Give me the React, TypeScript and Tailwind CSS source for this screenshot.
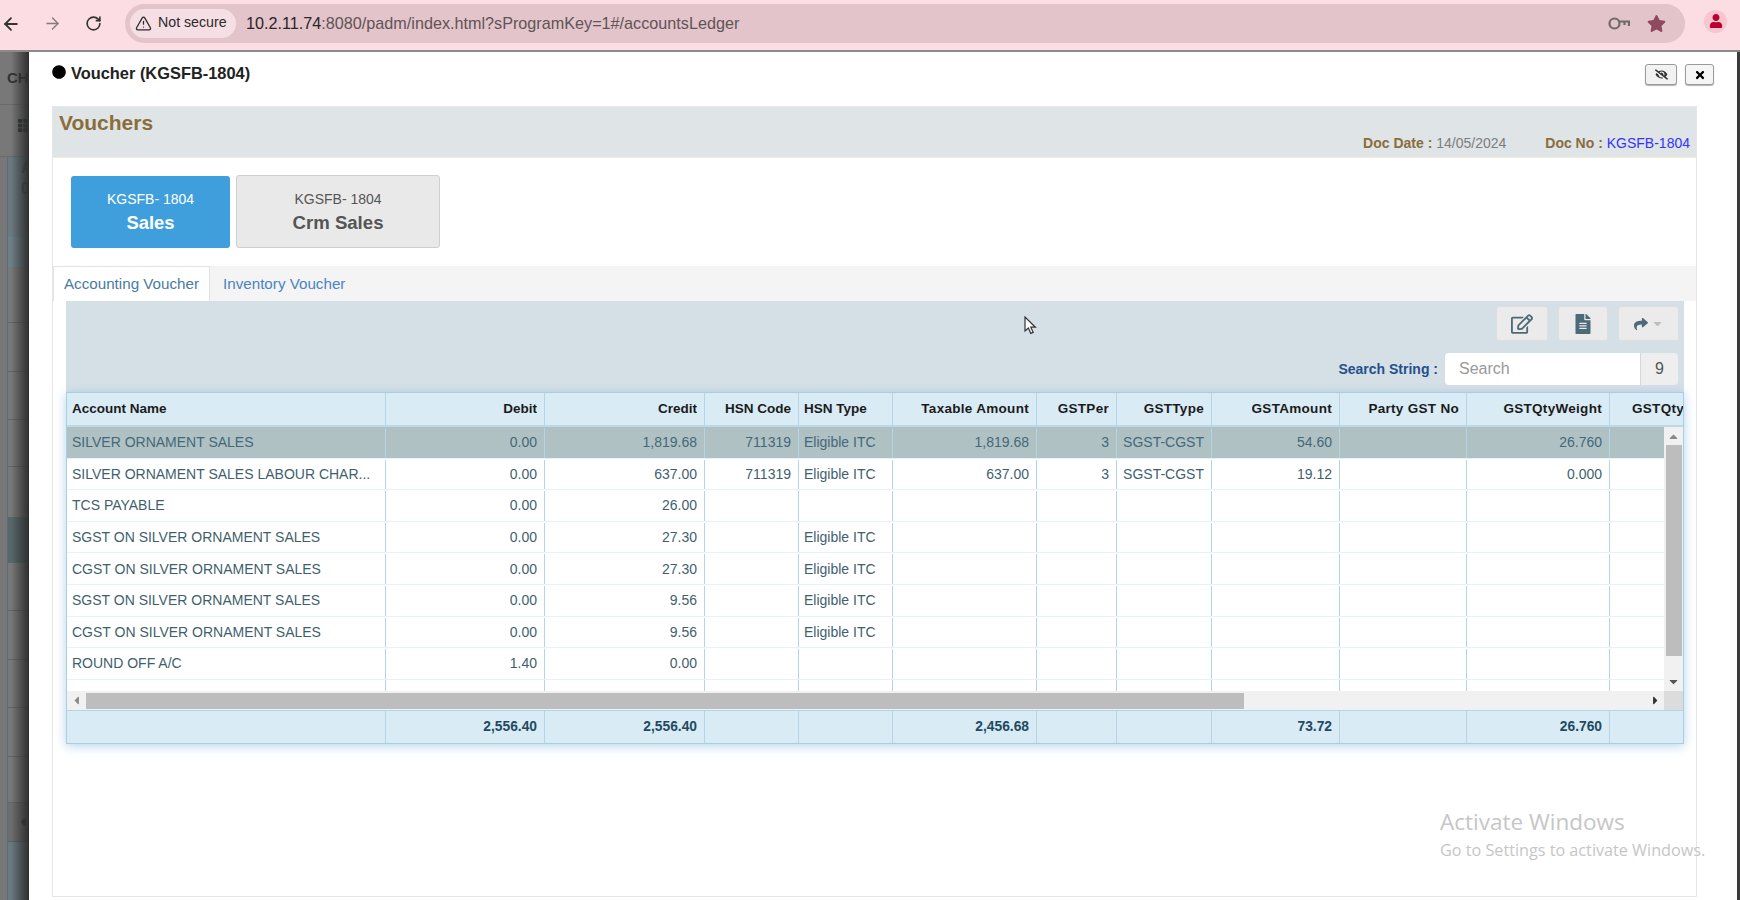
import React from "react";
import { ArrowLeft, ArrowRight, RotateCw, TriangleAlert } from "lucide-react";
import { FaRegEdit, FaFileAlt, FaShare, FaEyeSlash, FaTimes, FaStar, FaUser, FaTh, FaCaretDown, FaCaretUp, FaCaretLeft, FaCaretRight, FaCircle } from "react-icons/fa";

const widths = ["w-[319px]", "w-[159px]", "w-[160px]", "w-[94px]", "w-[94px]", "w-[144px]", "w-[80px]", "w-[95px]", "w-[128px]", "w-[127px]", "w-[143px]", "w-[75px]"];
const left = [true, false, false, false, true, false, false, false, false, false, false, false];
const headers = ["Account Name", "Debit", "Credit", "HSN Code", "HSN Type", "Taxable Amount", "GSTPer", "GSTType", "GSTAmount", "Party GST No", "GSTQtyWeight", "GSTQty"];
const rows = [
  ["SILVER ORNAMENT SALES", "0.00", "1,819.68", "711319", "Eligible ITC", "1,819.68", "3", "SGST-CGST", "54.60", "", "26.760", ""],
  ["SILVER ORNAMENT SALES LABOUR CHAR...", "0.00", "637.00", "711319", "Eligible ITC", "637.00", "3", "SGST-CGST", "19.12", "", "0.000", ""],
  ["TCS PAYABLE", "0.00", "26.00", "", "", "", "", "", "", "", "", ""],
  ["SGST ON SILVER ORNAMENT SALES", "0.00", "27.30", "", "Eligible ITC", "", "", "", "", "", "", ""],
  ["CGST ON SILVER ORNAMENT SALES", "0.00", "27.30", "", "Eligible ITC", "", "", "", "", "", "", ""],
  ["SGST ON SILVER ORNAMENT SALES", "0.00", "9.56", "", "Eligible ITC", "", "", "", "", "", "", ""],
  ["CGST ON SILVER ORNAMENT SALES", "0.00", "9.56", "", "Eligible ITC", "", "", "", "", "", "", ""],
  ["ROUND OFF A/C", "1.40", "0.00", "", "", "", "", "", "", "", "", ""],
];
const totals = ["", "2,556.40", "2,556.40", "", "", "2,456.68", "", "", "73.72", "", "26.760", ""];

function BackdropLine({ h, dark }: { h: string; dark?: boolean }) {
  return <div className={`${h} shrink-0 border-b border-[#5f6668] ${dark ? "bg-[#56686c]" : ""}`} />;
}

function Backdrop() {
  return (
    <div className="relative w-[29px] shrink-0 h-full overflow-hidden bg-[#787878]">
      <div className="h-[53px] border-b border-[#6a6a6a] pl-[7px] pt-[17px] text-[15px] font-bold leading-[18px] text-[#2f3436] whitespace-nowrap">CH</div>
      <div className="h-[52px] border-b border-[#6a6a6a] pl-[18px] pt-[13px] text-[#2f3436]"><FaTh size={15} /></div>
      <div className="ml-[7px] border-l border-[#5f6e76]">
        <div className="h-[79px] bg-[#6c7a80] pl-[13px] text-[16px] font-bold leading-[21px] text-[#3a566e]"><div>A</div><div>0</div></div>
        <div className="h-[32px] shrink-0 border-y border-[#5c7f90] bg-[#6f7f86]" />
        <BackdropLine h="h-[55px]" />
        <BackdropLine h="h-[49px]" />
        <BackdropLine h="h-[48px]" />
        <BackdropLine h="h-[47px]" />
        <div className="h-[50px]" />
        <BackdropLine h="h-[46px]" dark />
        <BackdropLine h="h-[48px]" />
        <BackdropLine h="h-[49px]" />
        <BackdropLine h="h-[48px]" />
        <BackdropLine h="h-[49px]" />
        <BackdropLine h="h-[46px]" />
        <div className="h-[39px] border-b border-[#4e646e] bg-[#6e6e6e] pl-[8px] pt-[12px] text-[#3a3a3a]"><FaCaretLeft size={14} /></div>
        <div className="h-[60px] bg-[#6a7a80]" />
      </div>
      <div className="absolute inset-y-0 right-0 w-[18px] bg-gradient-to-r from-transparent to-[#2e2e2e]" />
    </div>
  );
}

function Cell({ i, text, cls }: { i: number; text: string; cls: string }) {
  return (
    <div className={`${widths[i]} shrink-0 h-full border-r border-[#b3d5e6] pl-[5px] pr-[7px] flex items-center ${left[i] ? "justify-start" : "justify-end"} ${cls}`}>
      <span className="whitespace-nowrap overflow-hidden">{text}</span>
    </div>
  );
}

function Grid() {
  return (
    <div className="w-[1618px] border border-[#a6cfe4] shadow-[0_2px_10px_rgba(90,160,210,0.45)] bg-white overflow-hidden">
      <div className="flex h-[34px] bg-[#d9ebf4] border-b-2 border-[#c0d8e5] overflow-hidden">
        {headers.slice(0, 5).map((h, i) => (
          <Cell key={h} i={i} text={h} cls="text-[13.5px] font-bold text-[#1b1b1b]" />
        ))}
        {headers.slice(5, 11).map((h, i) => (
          <Cell key={h} i={i + 5} text={h} cls="text-[13.5px] tracking-[0.3px] font-bold text-[#1b1b1b]" />
        ))}
        <div className="w-[75px] shrink-0 pl-[22px] flex items-center text-[13.5px] tracking-[0.3px] font-bold text-[#1b1b1b] whitespace-nowrap">GSTQty</div>
      </div>
      <div className="flex h-[264px]">
        <div className="w-[1598px] overflow-hidden">
          {rows.map((r, n) => (
            <div key={n} className={`flex h-[31.6px] pt-[1px] border-b border-[#e6f2f8] overflow-hidden text-[14px] ${n === 0 ? "bg-[#b0c1c3] text-[#44687a]" : "bg-white text-[#3f5f6f]"}`}>
              {r.map((c, i) => (
                <Cell key={i} i={i} text={c} cls="" />
              ))}
            </div>
          ))}
          <div className="flex h-[12px] overflow-hidden">
            {widths.map((_, i) => (
              <Cell key={i} i={i} text="" cls="" />
            ))}
          </div>
        </div>
        <div className="w-[19px] flex flex-col items-center bg-[#f1f1f1] text-[#555]">
          <div className="h-[18px] flex items-center"><FaCaretUp size={13} className="text-[#8a8a8a]" /></div>
          <div className="h-[211px] w-[16px] bg-[#bdbdbd]" />
          <div className="flex-1 flex items-end pb-[3px]"><FaCaretDown size={13} /></div>
        </div>
      </div>
      <div className="flex h-[19px] items-center bg-[#f1f1f1] text-[#555]">
        <div className="w-[19px] flex justify-center"><FaCaretLeft size={13} className="text-[#8a8a8a]" /></div>
        <div className="h-[16px] w-[1159px] bg-[#bdbdbd]" />
        <div className="w-[420px] flex justify-end pr-[2px]"><FaCaretRight size={13} className="text-[#333]" /></div>
        <div className="h-full w-[19px] ml-auto bg-[#dcdcdc]" />
      </div>
      <div className="flex h-[33px] bg-[#d9ebf4] border-t border-[#b3d5e6] overflow-hidden">
        {totals.map((t, i) => (
          <Cell key={i} i={i} text={t} cls="text-[13.8px] font-bold text-[#1f4a62]" />
        ))}
      </div>
    </div>
  );
}

function ToolBtn({ w, children }: { w: string; children: React.ReactNode }) {
  return <div className={`${w} h-[35px] flex items-center justify-center rounded-[3px] border border-[#dedede] bg-[#ebebeb] text-[#4d6a78]`}>{children}</div>;
}

export default function App() {
  return (
    <div className="relative w-[1740px] h-[900px] overflow-hidden bg-white [font-family:Liberation_Sans,sans-serif]">
      {/* browser bar */}
      <div className="h-[52px] bg-[#fddde4] border-b-2 border-[#8d8a8b] flex items-center pb-[2px]">
        <div className="w-[125px] shrink-0 flex items-center text-[#333]">
          <ArrowLeft size={20} strokeWidth={2.2} className="ml-[1px] -mt-[1px]" />
          <ArrowRight size={19} strokeWidth={1.8} className="ml-[22px] -mt-[1px] text-[#8a7a7e]" />
          <RotateCw size={17} strokeWidth={2.3} className="ml-[23px] -mt-[1px]" />
        </div>
        <div className="w-[1560px] h-[39px] rounded-full bg-[#e3c4ca] flex items-center pl-[5px] -mt-[2px]">
          <div className="h-[29px] w-[106px] rounded-full bg-[#f6dfe4] flex items-center pl-[5px] gap-[6px] text-[14.2px] text-[#2b2b2b] whitespace-nowrap">
            <TriangleAlert size={17} strokeWidth={1.8} />
            <span>Not secure</span>
          </div>
          <div className="ml-[10px] text-[16.2px] text-[#5f5457] whitespace-nowrap">
            <span className="text-[#2a2527]">10.2.11.74</span>:8080/padm/index.html?sProgramKey=1#/accountsLedger
          </div>
          <div className="ml-auto mr-[19px] flex items-center gap-[17px]">
            <svg width="22" height="15" viewBox="0 0 22 15" fill="none" stroke="#6e6a6c" strokeWidth="2.2">
              <circle cx="6.5" cy="7.5" r="5" />
              <path d="M11.5 5.5h9.5v4.5M16.5 5.5v3.5" />
            </svg>
            <FaStar size={19} className="text-[#8f4a60]" />
          </div>
        </div>
        <div className="ml-[19px] w-[23px] h-[23px] mt-[-6px] rounded-full bg-[#f9c5cf] flex items-center justify-center">
          <FaUser size={14} className="text-[#b9002f]" />
        </div>
      </div>

      <div className="flex h-[848px]">
        <Backdrop />

        {/* modal */}
        <div className="flex-1 bg-white pl-[23px] pr-[40px]">
          <div className="h-[54px] flex pt-[12px] relative">
            <div className="flex items-start gap-[5px] text-[16.4px] font-bold leading-[18px] text-[#222]">
              <FaCircle size={14} className="mt-[1px] text-black" />
              <span>Voucher (KGSFB-1804)</span>
            </div>
            <div className="absolute right-[-17px] top-[12px] flex gap-[8px]">
              <div className="w-[32px] h-[21px] flex items-center justify-center rounded-[3px] border border-[#9a9a9a] bg-[#f2f2f2] text-[#333] shadow-[0_1px_1px_rgba(0,0,0,0.3)]"><FaEyeSlash size={13} /></div>
              <div className="w-[29px] h-[21px] flex items-center justify-center rounded-[3px] border border-[#9a9a9a] bg-[#f5f5f5] text-black shadow-[0_1px_1px_rgba(0,0,0,0.3)]"><FaTimes size={12} /></div>
            </div>
          </div>

          <div className="h-[791px] w-[1645px] border border-[#e3e7ec]">
            <div className="relative h-[51px] bg-[#dfe4e7] border-b border-[#f5ecd9] pl-[6px] pt-[4px]">
              <div className="text-[21px] font-bold leading-[24px] text-[#8a6d3b]">Vouchers</div>
              <div className="absolute right-[6px] bottom-[6px] flex text-[14px] leading-[15px]">
                <span className="font-bold text-[#8a6d3b]">Doc Date :&nbsp;</span>
                <span className="text-[#7d7d7d]">14/05/2024</span>
                <span className="ml-[39px] font-bold text-[#8a6d3b]">Doc No :&nbsp;</span>
                <span className="text-[#3333ff]">KGSFB-1804</span>
              </div>
            </div>

            <div className="h-[108px] flex gap-[6px] pl-[18px] pt-[18px]">
              <div className="w-[159px] h-[72px] rounded-[3px] bg-[#3f9fdc] text-white flex flex-col items-center pt-[15px]">
                <div className="text-[14px] leading-[16px]">KGSFB- 1804</div>
                <div className="mt-[5px] text-[18.4px] font-bold leading-[22px]">Sales</div>
              </div>
              <div className="w-[204px] h-[73px] -mt-[1px] rounded-[3px] border border-[#cfcfcf] bg-[#e9e9e9] text-[#555] flex flex-col items-center pt-[15px]">
                <div className="text-[14px] leading-[16px]">KGSFB- 1804</div>
                <div className="mt-[5px] text-[18.6px] font-bold leading-[22px]">Crm Sales</div>
              </div>
            </div>

            <div className="h-[35px] bg-[#f4f4f4] flex items-stretch text-[15.2px]">
              <div className="w-[157px] pt-[1px] bg-white border-x border-t border-[#e3e3e3] flex items-center justify-center text-[#4a7ba0] whitespace-nowrap">Accounting Voucher</div>
              <div className="ml-[13px] pt-[1px] flex items-center text-[#4a84c0]">Inventory Voucher</div>
            </div>

            <div className="ml-[13px] w-[1618px]">
              <div className="h-[91px] bg-[#d5e0e6] flex flex-col items-end pt-[5px] pr-[5px]">
                <div className="flex gap-[10px]">
                  <ToolBtn w="w-[52px]"><FaRegEdit size={22} /></ToolBtn>
                  <ToolBtn w="w-[50px]"><FaFileAlt size={20} /></ToolBtn>
                  <ToolBtn w="w-[61px]">
                    <FaShare size={14} />
                    <FaCaretDown size={13} className="ml-[3px] text-[#b9bec1]" />
                  </ToolBtn>
                </div>
                <div className="mt-[12px] flex items-center pr-[1px]">
                  <span className="mr-[7px] text-[14px] font-bold text-[#24508c]">Search String :</span>
                  <div className="w-[195px] h-[32px] rounded-l-[4px] bg-white pl-[14px] flex items-center text-[16px] text-[#9a9a9a]">Search</div>
                  <div className="w-[38px] h-[32px] rounded-r-[4px] border-l border-[#d6d6d6] bg-[#eeeeee] flex items-center justify-center text-[16px] text-[#555]">9</div>
                </div>
              </div>
              <Grid />
            </div>
          </div>
        </div>

        <div className="w-[3px] bg-[#3a3a3a]" />
      </div>

      {/* mouse cursor, over content */}
      <svg className="absolute left-[1024px] top-[316px]" width="14" height="19" viewBox="0 0 14 19">
        <path d="M1 1v14l3.4-3 2.4 5.4 2.4-1-2.4-5.2h4.6z" fill="#fff" stroke="#333" strokeWidth="1.2" />
      </svg>

      {/* OS watermark, over content */}
      <div className="absolute left-[1440px] top-[807px] text-[#c6c6c6] [font-family:Open_Sans,sans-serif] whitespace-nowrap">
        <div className="text-[22.5px] leading-[30px]">Activate Windows</div>
        <div className="mt-[2px] text-[16.2px] leading-[22px]">Go to Settings to activate Windows.</div>
      </div>
    </div>
  );
}
